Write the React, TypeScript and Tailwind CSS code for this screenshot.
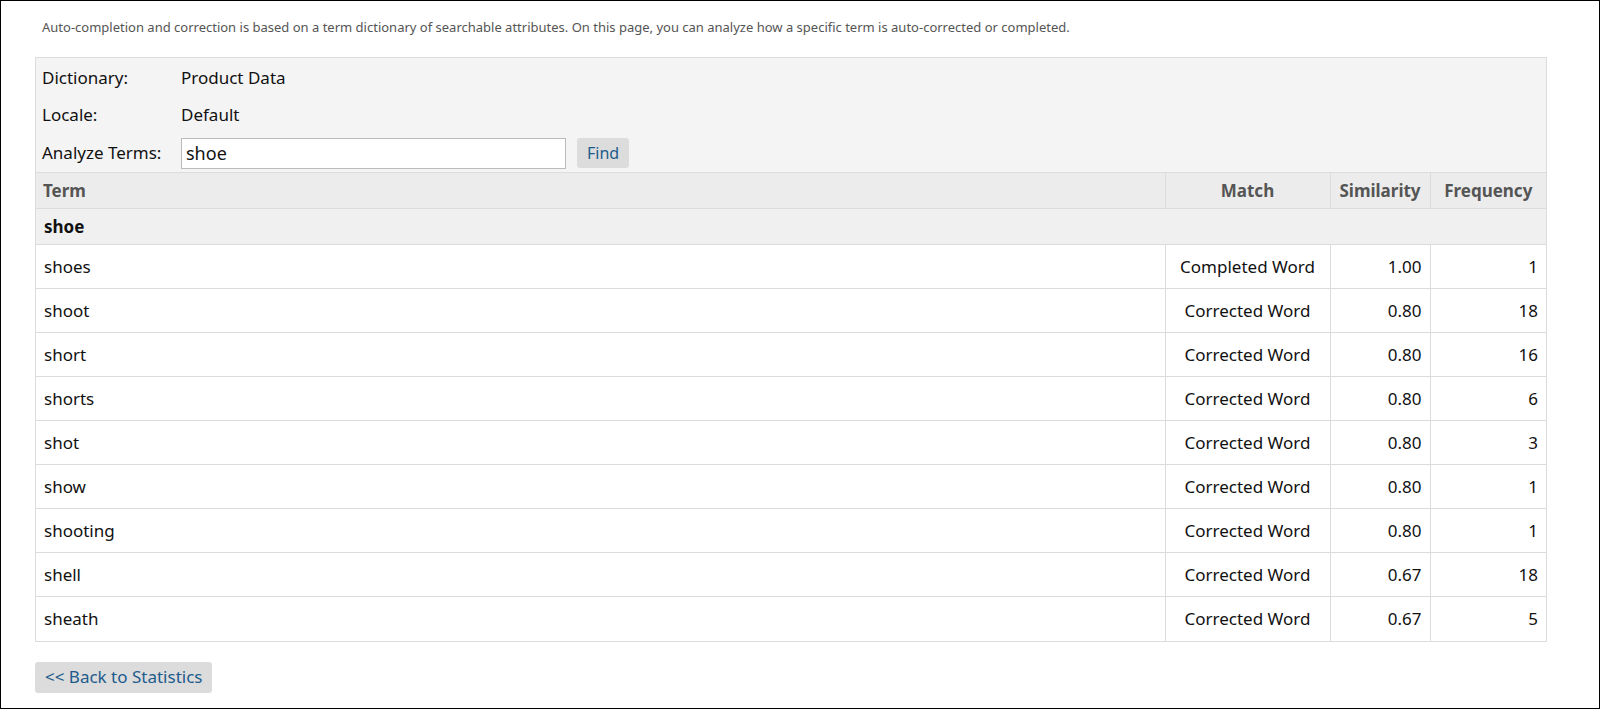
const rows = [
  ["shoes", "Completed Word", "1.00", "1"],
  ["shoot", "Corrected Word", "0.80", "18"],
  ["short", "Corrected Word", "0.80", "16"],
  ["shorts", "Corrected Word", "0.80", "6"],
  ["shot", "Corrected Word", "0.80", "3"],
  ["show", "Corrected Word", "0.80", "1"],
  ["shooting", "Corrected Word", "0.80", "1"],
  ["shell", "Corrected Word", "0.67", "18"],
  ["sheath", "Corrected Word", "0.67", "5"],
];

export default function App() {
  return (
    <div className="w-full h-screen overflow-hidden bg-white font-['Liberation_Sans']">
      <div className="h-[709px] border border-black pl-[34px] pr-[52px]">
        <p className="text-[13px] text-[#555] pt-[17px] pl-[7px] h-[56px]">
          Auto-completion and correction is based on a term dictionary of searchable attributes. On this page, you can analyze how a specific term is auto-corrected or completed.
        </p>
        <div className="border border-[#dcdcdc] bg-[#f4f4f4]">
          <div className="px-[6px] pt-[2px] text-[17px] text-[#111]">
            <div className="flex h-[36px] items-center">
              <span className="w-[139px]">Dictionary:</span>
              <span>Product Data</span>
            </div>
            <div className="flex h-[38px] items-center">
              <span className="w-[139px]">Locale:</span>
              <span>Default</span>
            </div>
            <div className="flex h-[38px] items-center">
              <span className="w-[139px]">Analyze Terms:</span>
              <input
                defaultValue="shoe"
                className="w-[385px] h-[31px] border border-[#bbb] bg-white px-[4px] text-[18px] outline-none"
              />
              <button className="ml-[11px] h-[30px] px-[10px] rounded-[3px] bg-[#dcdcdc] text-[#1d5b8c] text-[16px]">
                Find
              </button>
            </div>
          </div>
          <table className="w-full border-collapse text-[17px]">
            <thead>
              <tr className="h-[36px] bg-[#ececec] text-[#555] font-bold">
                <th className="text-left px-[7px] border-t border-[#dcdcdc]">Term</th>
                <th className="w-[165px] text-center border border-r-0 border-[#dcdcdc]">Match</th>
                <th className="w-[100px] text-center border border-[#dcdcdc]">Similarity</th>
                <th className="w-[116px] text-center border-t border-[#dcdcdc]">Frequency</th>
              </tr>
            </thead>
            <tbody>
              <tr className="h-[36px] bg-[#f0f0f0]">
                <td colSpan={4} className="px-[8px] font-bold text-[#111] border-t border-[#dcdcdc]">shoe</td>
              </tr>
              {rows.map((r) => (
                <tr key={r[0]} className="h-[44px] bg-white text-[#111]">
                  <td className="px-[8px] border-t border-[#dcdcdc]">{r[0]}</td>
                  <td className="text-center border-t border-l border-[#dcdcdc]">{r[1]}</td>
                  <td className="text-right px-[8px] border-t border-l border-[#dcdcdc]">{r[2]}</td>
                  <td className="text-right px-[8px] border-t border-l border-[#dcdcdc]">{r[3]}</td>
                </tr>
              ))}
            </tbody>
          </table>
        </div>
        <button className="mt-[20px] h-[31px] px-[10px] rounded-[3px] bg-[#dcdcdc] text-[#1d5b8c] text-[17px]">
          &lt;&lt; Back to Statistics
        </button>
      </div>
    </div>
  );
}
